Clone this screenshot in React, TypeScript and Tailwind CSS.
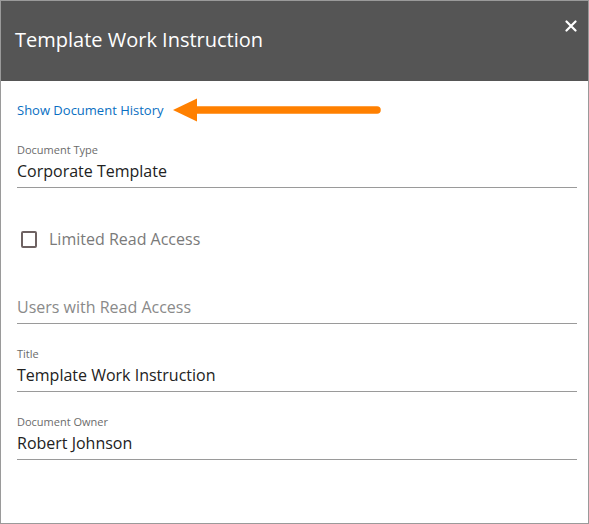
import React from 'react';

const Field = ({ label, value }: { label: string; value: string }) => (
  <div className="border-b border-[#9a9a9a] pb-[5px]">
    <div className="text-[11px] leading-[14px] text-[#6b6b6b]">{label}</div>
    <div className="mt-[3px] text-[16px] leading-[22px] text-[#222]">{value}</div>
  </div>
);

const App: React.FC = () => {
  return (
    <div
      className="w-[589px] h-[524px] bg-white border border-[#9a9a9a] flex flex-col"
      style={{ fontFamily: '"Open Sans", sans-serif' }}
    >
      <div className="h-[80px] bg-[#555555] flex items-center justify-between pl-[14px] pr-[7px] shrink-0">
        <h1 className="text-[20px] text-white leading-none mb-[3px]">Template Work Instruction</h1>
        <button className="mb-[30px] w-[20px] h-[20px] flex items-center justify-center">
          <svg width="12" height="12" viewBox="0 0 12 12">
            <path d="M1.5 1.5 L10.5 10.5 M10.5 1.5 L1.5 10.5" stroke="white" strokeWidth="2.2" strokeLinecap="round" />
          </svg>
        </button>
      </div>

      <div className="pl-4 pr-[11px] pt-[17px]">
        <div className="flex items-center gap-[9px] h-[24px]">
          <a className="text-[13px] leading-[18px] text-[#0a6fc2]">Show Document History</a>
          <svg width="210" height="24" viewBox="0 0 210 24">
            <path d="M0 12 L24 0.5 L24 23.5 Z" fill="#ff8000" />
            <line x1="22" y1="12" x2="204" y2="12" stroke="#ff8000" strokeWidth="7.5" strokeLinecap="round" />
          </svg>
        </div>

        <div className="mt-[21px]">
          <Field label="Document Type" value="Corporate Template" />
        </div>

        <label className="mt-[39px] flex items-center h-[24px]">
          <span className="ml-[4px] w-[16px] h-[17px] border-2 border-[#6e6262] rounded-[2px]" />
          <span className="ml-[12px] text-[16px] text-[#7a7a7a]">Limited Read Access</span>
        </label>

        <div className="mt-[45px] border-b border-[#9a9a9a] pb-[5px]">
          <div className="text-[16px] leading-[22px] text-[#8a8a8a]">Users with Read Access</div>
        </div>

        <div className="mt-[23px]">
          <Field label="Title" value="Template Work Instruction" />
        </div>

        <div className="mt-[23px]">
          <Field label="Document Owner" value="Robert Johnson" />
        </div>
      </div>
    </div>
  );
};

export default App;
